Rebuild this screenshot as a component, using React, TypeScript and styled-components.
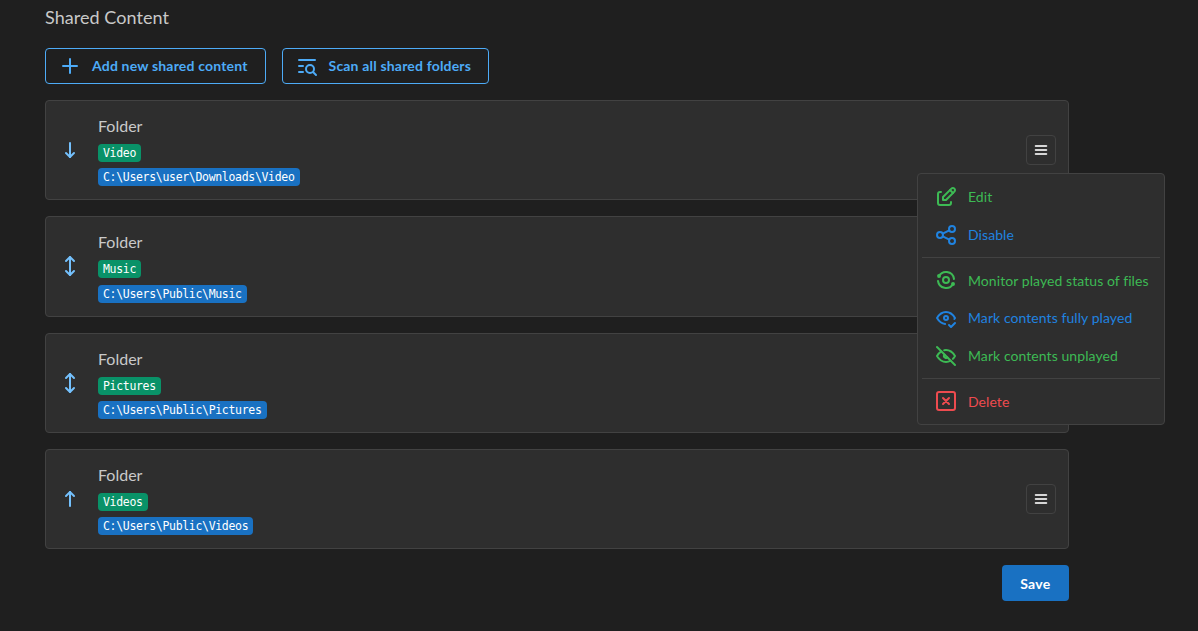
import React from "react";
import styled, { createGlobalStyle } from "styled-components";
import {
  TbAnalyze,
  TbArrowNarrowDown,
  TbArrowNarrowUp,
  TbArrowsVertical,
  TbEdit,
  TbEyeCheck,
  TbEyeOff,
  TbListSearch,
  TbMenu2,
  TbPlus,
  TbShare,
  TbSquareX,
} from "react-icons/tb";

type Direction = "down" | "both" | "up";

type FolderType = {
  id: number;
  name: string;
  path: string;
  direction: Direction;
  hasMenu: boolean;
};

const folders: FolderType[] = [
  { id: 1, name: "Video", path: "C:\\Users\\user\\Downloads\\Video", direction: "down", hasMenu: true },
  { id: 2, name: "Music", path: "C:\\Users\\Public\\Music", direction: "both", hasMenu: false },
  { id: 3, name: "Pictures", path: "C:\\Users\\Public\\Pictures", direction: "both", hasMenu: false },
  { id: 4, name: "Videos", path: "C:\\Users\\Public\\Videos", direction: "up", hasMenu: true },
];

const arrows = {
  down: TbArrowNarrowDown,
  both: TbArrowsVertical,
  up: TbArrowNarrowUp,
};

const App: React.FC = () => {
  return (
    <Page>
      <GlobalStyle />
      <Title>Shared Content</Title>
      <Toolbar>
        <OutlineButton>
          <TbPlus size={24} />
          Add new shared content
        </OutlineButton>
        <OutlineButton>
          <TbListSearch size={24} />
          Scan all shared folders
        </OutlineButton>
      </Toolbar>
      <List>
        {folders.map((item) => {
          const Arrow = arrows[item.direction];
          return (
            <Card key={item.id}>
              <ArrowCell>
                <Arrow size={24} />
              </ArrowCell>
              <Info>
                <Kind>Folder</Kind>
                <Tag $tone="green">{item.name}</Tag>
                <Tag $tone="blue">{item.path}</Tag>
              </Info>
              {item.hasMenu && (
                <MenuButton>
                  <TbMenu2 size={16} strokeWidth={2.8} />
                </MenuButton>
              )}
            </Card>
          );
        })}
      </List>
      <Footer>
        <SaveButton>Save</SaveButton>
      </Footer>
      <Menu>
        <MenuItem $tone="green">
          <TbEdit size={24} />
          Edit
        </MenuItem>
        <MenuItem $tone="blue">
          <TbShare size={24} />
          Disable
        </MenuItem>
        <Divider />
        <MenuItem $tone="green">
          <TbAnalyze size={24} />
          Monitor played status of files
        </MenuItem>
        <MenuItem $tone="blue">
          <TbEyeCheck size={24} />
          Mark contents fully played
        </MenuItem>
        <MenuItem $tone="green">
          <TbEyeOff size={24} />
          Mark contents unplayed
        </MenuItem>
        <Divider />
        <MenuItem $tone="red">
          <TbSquareX size={24} />
          Delete
        </MenuItem>
      </Menu>
    </Page>
  );
};

export default App;

const tones = {
  green: "#3dba54",
  blue: "#2083e0",
  red: "#ee4b4f",
};

const GlobalStyle = createGlobalStyle`
  html, body {
    margin: 0;
    height: 100%;
    background-color: #1f1f1f;
    overflow: hidden;
  }
  body {
    font-family: Lato, "Liberation Sans", sans-serif;
    color: #c9c9c9;
  }
`;

const Page = styled.div`
  position: relative;
  width: 1024px;
  padding: 3px 0 0 45px;
`;

const Title = styled.div`
  font-size: 18px;
  line-height: 28px;
  height: 28px;
  letter-spacing: 0.05px;
`;

const Toolbar = styled.div`
  display: flex;
  gap: 16px;
  margin-top: 17px;
`;

const OutlineButton = styled.div`
  display: flex;
  align-items: center;
  gap: 10px;
  height: 36px;
  box-sizing: border-box;
  padding: 0 17px 0 12px;
  border: 1px solid #4dabf7;
  border-radius: 4px;
  color: #4dabf7;
  font-size: 14px;
  font-weight: 700;
  letter-spacing: 0.18px;
  line-height: 34px;
  & > svg {
    flex: none;
  }
`;

const List = styled.div`
  display: flex;
  flex-direction: column;
  gap: 16px;
  margin-top: 16px;
`;

const Card = styled.div`
  display: flex;
  align-items: center;
  height: 100.3px;
  box-sizing: border-box;
  padding: 0 12px;
  background-color: #2e2e2e;
  border: 1px solid #424242;
  border-radius: 4px;
`;

const ArrowCell = styled.div`
  display: flex;
  width: 24px;
  color: #74c0fc;
`;

const Info = styled.div`
  flex: 1;
  display: flex;
  flex-direction: column;
  align-items: flex-start;
  margin-left: 16px;
`;

const Kind = styled.div`
  font-size: 16px;
  line-height: 24px;
  margin-bottom: 6px;
`;

const Tag = styled.code<{ $tone: "green" | "blue" }>`
  display: block;
  height: 18px;
  line-height: 18px;
  padding: 0 5px;
  margin-bottom: 6.4px;
  border-radius: 4px;
  font-family: "DejaVu Sans Mono", "Liberation Mono", monospace;
  font-size: 11.5px;
  letter-spacing: -0.32px;
  color: #ffffff;
  background-color: ${(p) => (p.$tone === "green" ? "#099268" : "#1971c2")};
  &:last-child {
    margin-bottom: 0;
  }
`;

const MenuButton = styled.div`
  display: flex;
  align-items: center;
  justify-content: center;
  width: 30px;
  height: 30px;
  box-sizing: border-box;
  background-color: #2e2e2e;
  border: 1px solid #424242;
  border-radius: 4px;
  color: #d6d6d6;
`;

const Footer = styled.div`
  display: flex;
  justify-content: flex-end;
  margin-top: 16px;
`;

const SaveButton = styled.div`
  display: flex;
  align-items: center;
  height: 36px;
  padding: 0 18.5px;
  border-radius: 4px;
  background-color: #1971c2;
  color: #ffffff;
  font-size: 14px;
  font-weight: 700;
  letter-spacing: 0.3px;
`;

const Menu = styled.div`
  position: absolute;
  left: 917px;
  top: 173px;
  width: 248px;
  box-sizing: border-box;
  padding: 4px;
  background-color: #2e2e2e;
  border: 1px solid #424242;
  border-radius: 4px;
`;

const MenuItem = styled.div<{ $tone: keyof typeof tones }>`
  display: flex;
  align-items: center;
  gap: 10px;
  height: 37.7px;
  padding: 0 12px;
  font-size: 14px;
  letter-spacing: 0.07px;
  white-space: nowrap;
  color: ${(p) => tones[p.$tone]};
  & > svg {
    flex: none;
  }
`;

const Divider = styled.div`
  height: 1px;
  margin: 4px 0 3px;
  background-color: #424242;
`;
